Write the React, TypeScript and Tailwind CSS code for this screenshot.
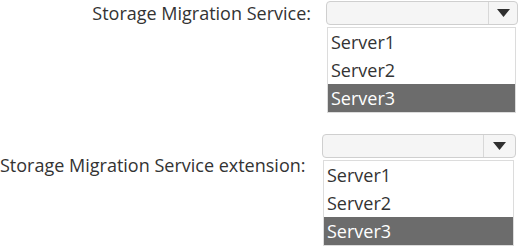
const servers = ["Server1", "Server2", "Server3"];

function Combo({ width, divider }: { width: string; divider: string }) {
  return (
    <div className={`flex h-[24px] ${width} rounded-[4px] border border-[#cfcfcf] bg-[#f5f5f5]`}>
      <div className="flex-1" />
      <div className={`flex ${divider} items-center justify-center border-l border-[#d8d8d8]`}>
        <svg width="13" height="8" viewBox="0 0 13 8">
          <path d="M0 0h13L6.5 8z" fill="#2f2f2f" />
        </svg>
      </div>
    </div>
  );
}

function List({ width }: { width: string }) {
  return (
    <div className={`flex ${width} flex-col border border-[#dcdcdc] bg-white`}>
      {servers.map((s, i) => (
        <div
          key={s}
          className={`flex h-[28px] items-center pl-[3px] text-[18px] leading-none ${
            i === 2 ? "bg-[#6c6c6c] text-white" : "text-[#333]"
          }`}
        >
          {s}
        </div>
      ))}
    </div>
  );
}

export default function App() {
  return (
    <div className="h-[246px] w-[519px] overflow-hidden bg-white font-['Open_Sans',sans-serif] text-[#333]">
      <div className="flex pt-[1px]">
        <div className="w-[311px] pt-[1px] text-right text-[18px] leading-[22px]">Storage Migration Service:</div>
        <div className="ml-[15px] flex flex-col gap-[2px]">
          <Combo width="w-[192px]" divider="w-[29px]" />
          <div className="pl-[1px]">
            <List width="w-[189px]" />
          </div>
        </div>
      </div>
      <div className="mt-[21px] flex">
        <div className="w-[304px] pt-[20px] text-[18px] leading-[22px] whitespace-nowrap">Storage Migration Service extension:</div>
        <div className="ml-[18px] flex flex-col gap-[2px]">
          <Combo width="w-[194px]" divider="w-[32px]" />
          <div className="pl-[1px]">
            <List width="w-[191px]" />
          </div>
        </div>
      </div>
    </div>
  );
}
